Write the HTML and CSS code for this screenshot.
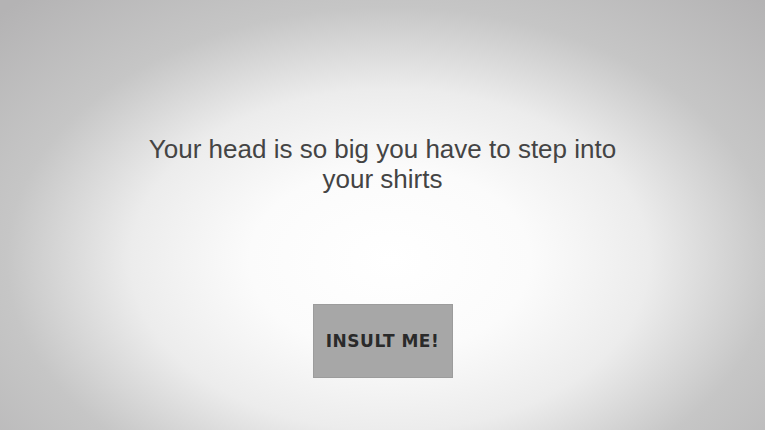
FILE: index.html
```html
<!DOCTYPE html>
<html lang="en">
<head>
  <meta charset="UTF-8" />
  <meta name="viewport" content="width=device-width, initial-scale=1.0" />
  <title>Insult Me</title>
  <link rel="stylesheet" href="styles.css">
</head>
<body>
  <main class="page">
    <p class="insult">Your head is so big you have to step into your shirts</p>
    <button class="btn">INSULT ME!</button>
  </main>
</body>
</html>
```

FILE: styles.css
```css
html, body {
  margin: 0;
  height: 100%;
}
body {
  font-family: 'Liberation Sans', Arial, sans-serif;
  background: radial-gradient(ellipse 540px 356px at 390px 260px, #ffffff 0%, #fbfbfb 26%, #ececec 48%, #c6c6c6 71%, #b4b3b4 100%);
}
.page {
  display: flex;
  flex-direction: column;
  align-items: center;
  padding-top: 134px;
}
.insult {
  margin: 0;
  width: 500px;
  text-align: center;
  font-size: 26px;
  line-height: 30px;
  color: #444444;
}
.btn {
  margin-top: 110px;
  width: 140px;
  height: 74px;
  background-color: #a7a7a7;
  border: 1px solid #9c9c9c;
  font-family: 'DejaVu Sans', sans-serif;
  font-weight: bold;
  font-size: 17px;
  letter-spacing: 0.5px;
  color: #2a2a2a;
  cursor: pointer;
}
```
